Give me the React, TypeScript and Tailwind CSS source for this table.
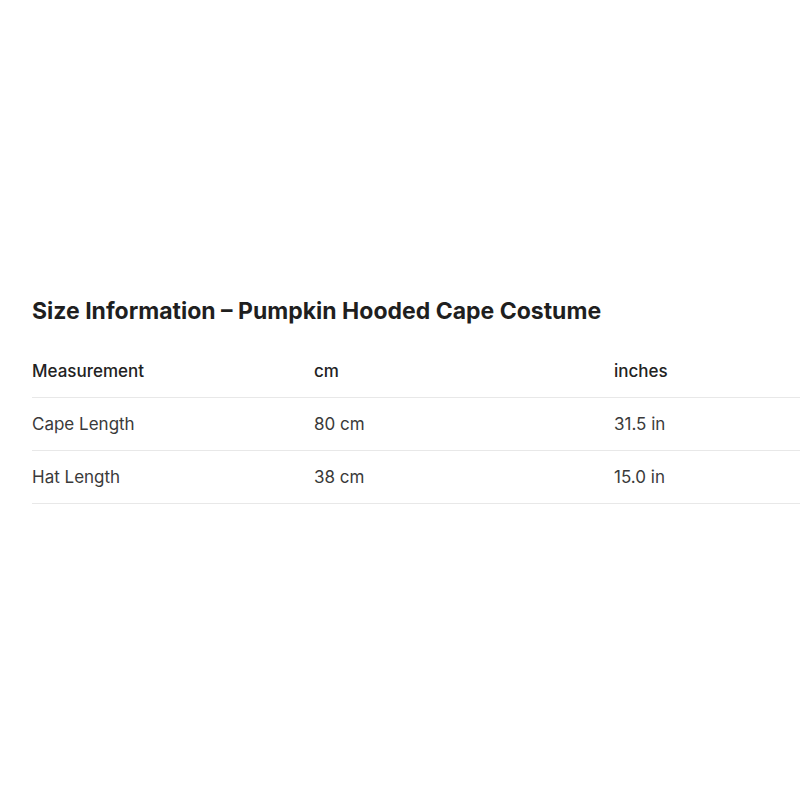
// Size chart for the pumpkin hooded cape — plain table, centred vertically

const rows = [
  { name: 'Cape Length', cm: '80 cm', inches: '31.5 in' },
  { name: 'Hat Length', cm: '38 cm', inches: '15.0 in' },
];

export default function App() {
  return (
    <div className="flex min-h-screen items-center bg-white pl-8 font-['Inter',_'Liberation_Sans',_sans-serif]">
      <div className="w-full">
        <h2 className="mb-5 text-[23px] font-bold leading-7 text-[#1f1f1f]">
          Size Information – Pumpkin Hooded Cape Costume
        </h2>

        <table className="w-full table-fixed border-collapse text-left text-[17px] leading-6">
          <thead>
            <tr className="border-b border-[#e8e8e8]">
              <th className="w-[282px] py-3.5 font-medium text-[#222]">Measurement</th>
              <th className="w-[300px] py-3.5 font-medium text-[#222]">cm</th>
              <th className="py-3.5 font-medium text-[#222]">inches</th>
            </tr>
          </thead>
          <tbody>
            {rows.map((r) => (
              <tr key={r.name} className="border-b border-[#e8e8e8]">
                <td className="py-3.5 text-[#3a3a3a]">{r.name}</td>
                <td className="py-3.5 text-[#3a3a3a]">{r.cm}</td>
                <td className="py-3.5 text-[#3a3a3a]">{r.inches}</td>
              </tr>
            ))}
          </tbody>
        </table>
      </div>
    </div>
  );
}
